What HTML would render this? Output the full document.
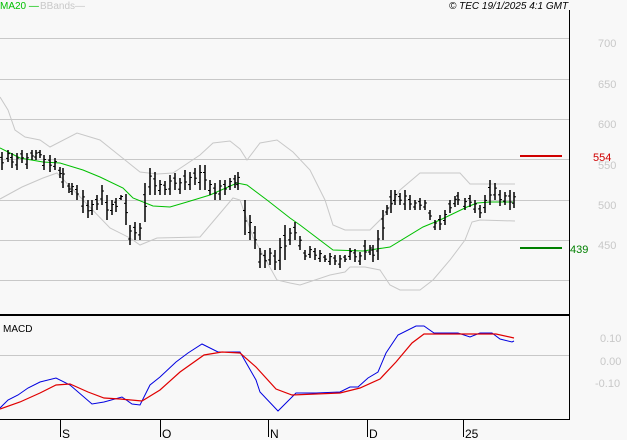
<!DOCTYPE html>
<html><head><meta charset="utf-8"><style>
html,body{margin:0;padding:0;background:#f8f8f8;}
svg{display:block;font-family:"Liberation Sans",sans-serif;}
</style></head><body>
<svg id="s" width="627" height="440" viewBox="0 0 627 440" xmlns="http://www.w3.org/2000/svg">
<rect width="627" height="440" fill="#f8f8f8"/>
<g stroke="#c8c8c8" stroke-width="1">
<line x1="0" y1="38.5" x2="569" y2="38.5"/><line x1="0" y1="79.5" x2="569" y2="79.5"/>
<line x1="0" y1="119.5" x2="569" y2="119.5"/><line x1="0" y1="159.5" x2="569" y2="159.5"/>
<line x1="0" y1="200.5" x2="569" y2="200.5"/><line x1="0" y1="240.5" x2="569" y2="240.5"/>
<line x1="0" y1="280.5" x2="569" y2="280.5"/><line x1="0" y1="355.5" x2="569" y2="355.5"/>
</g>
<g fill="none" stroke="#c8c8c8" stroke-width="1">
<polyline points="0,97 8,110 15,130 25,137 40,140 50,147 77,133 100,140 110,148 125,160 140,172 157,174 173,173 200,155 213,143 230,141 240,149 247,160 260,143 277,140 293,152 310,170 325,200 333,225 345,230 370,230 385,215 400,190 420,173 460,173 470,184 515,184"/>
<polyline points="0,199 22,187 43,178 57,173 83,200 110,228 130,238 140,245 157,238 200,237 233,198 240,200 253,237 277,280 290,283 300,285 315,280 330,275 345,272 350,267 365,267 380,270 390,285 400,290 420,290 433,280 450,260 465,240 472,222 480,220 515,221"/>
</g>
<polyline fill="none" stroke="#00c000" stroke-width="1" points="0,148 20,158 43,162 60,163 83,170 100,177 123,188 133,198 153,206 170,207 187,202 210,195 237,183 247,185 267,200 290,218 300,225 333,250 363,251 390,247 423,227 440,220 467,207 477,203 490,202 513,202"/>
<g id="bars" stroke="#000" stroke-width="1.5"></g>
<line x1="520" y1="156" x2="562" y2="156" stroke="#d00000" stroke-width="2"/>
<line x1="520" y1="248" x2="562" y2="248" stroke="#008000" stroke-width="2"/>
<text x="593" y="161" font-size="11" fill="#d00000">554</text>
<text x="570" y="253" font-size="11" fill="#008000">439</text>
<g font-size="11" fill="#c8c8c8">
<text x="598" y="47">700</text><text x="598" y="88">650</text><text x="598" y="128">600</text>
<text x="598" y="169">550</text><text x="598" y="209">500</text><text x="598" y="249">450</text>
<text x="600" y="342">0.10</text><text x="600" y="365">0.00</text><text x="595" y="387">-0.10</text>
</g>
<polyline fill="none" stroke="#0000e0" stroke-width="1" points="0,408 8,400 18,395 28,388 40,382 56,378 70,385 92,404 104,402 122,397 132,404 140,405 150,385 160,377 176,362 188,353 202,344 218,352 240,352 256,380 260,392 278,411 296,393 316,393 340,392 350,387 358,387 368,378 378,372 386,353 398,335 416,326 424,326 434,333 458,333 470,337 480,333 492,333 500,339 512,342 514,341"/>
<polyline fill="none" stroke="#e00000" stroke-width="1.2" points="0,409 20,402 40,393 56,385 70,384 88,392 104,398 120,399 142,401 160,390 180,372 204,355 222,352 240,353 256,367 276,389 292,395 340,393 360,388 380,379 396,362 412,343 424,334 440,334 496,334 514,338"/>
<line x1="0" y1="315" x2="569" y2="315" stroke="#000" stroke-width="2"/>
<line x1="0" y1="419.5" x2="569" y2="419.5" stroke="#000" stroke-width="1"/>
<line x1="569.5" y1="10" x2="569.5" y2="420" stroke="#000" stroke-width="1"/>
<g stroke="#000"><line x1="60.5" y1="420" x2="60.5" y2="437"/><line x1="160.5" y1="420" x2="160.5" y2="437"/><line x1="268.5" y1="420" x2="268.5" y2="437"/><line x1="367.5" y1="420" x2="367.5" y2="437"/><line x1="463.5" y1="420" x2="463.5" y2="437"/></g>
<g font-size="12" fill="#000"><text x="62" y="438">S</text><text x="162" y="438">O</text><text x="270" y="438">N</text><text x="369" y="438">D</text><text x="465" y="438">25</text></g>
<text x="3" y="332" font-size="10" fill="#000">MACD</text>
<text x="0" y="9" font-size="10" fill="#00c000">MA20 —</text>
<text x="40" y="9" font-size="10" fill="#c8c8c8">BBands—</text>
<text x="449" y="9" font-size="10" font-style="italic" fill="#000">© TEC 19/1/2025 4:1 GMT</text>
</svg>
<script>
var b=[[2,152,170],[8,150,162],[12,153,168],[17,153,170],[22,150,163],[27,153,169],[32,150,160],[36,150,160],[40,150,158],[44,155,170],[50,155,172],[55,158,170],[60,167,178],[63,168,188],[69,183,193],[72,183,195],[77,185,200],[83,190,213],[88,200,218],[92,200,215],[97,195,210],[102,185,205],[107,195,220],[112,200,215],[116,198,212],[121,195,200],[126,194,225],[130,225,245],[135,222,240],[140,223,240],[145,183,222],[150,168,195],[155,172,195],[160,180,195],[165,181,195],[170,175,195],[175,173,190],[180,178,194],[185,170,190],[190,172,190],[195,168,185],[200,165,190],[205,165,190],[210,180,195],[215,183,200],[220,180,200],[225,180,195],[230,178,190],[235,175,188],[238,172,190],[245,200,235],[250,215,240],[255,226,249],[260,248,268],[265,250,268],[270,248,265],[275,250,270],[280,238,270],[285,225,260],[290,228,245],[295,222,240],[300,236,250],[305,250,260],[310,246,258],[315,248,260],[320,250,262],[325,255,262],[330,253,265],[335,255,265],[340,255,268],[345,255,262],[350,248,260],[355,249,262],[360,252,265],[365,240,260],[370,245,255],[373,245,262],[378,230,260],[383,210,240],[387,205,215],[391,190,213],[395,190,205],[400,193,205],[405,190,210],[410,195,210],[415,200,210],[420,198,210],[425,200,210],[430,210,220],[435,220,230],[440,215,230],[445,210,225],[450,200,213],[455,196,207],[458,192,205],[465,198,210],[470,195,207],[475,200,213],[480,205,218],[485,195,213],[490,180,205],[495,183,200],[500,190,206],[505,192,205],[510,190,210],[514,192,208]];
var g=document.getElementById('bars'),h='';
b.forEach(function(a,i){var x=a[0],t=a[1],l=a[2],o=i%2?t+(l-t)*0.7:t+(l-t)*0.3,c=i%2?t+(l-t)*0.3:t+(l-t)*0.6;
h+='<line x1="'+x+'" y1="'+t+'" x2="'+x+'" y2="'+l+'"/><line x1="'+(x-2)+'" y1="'+o+'" x2="'+x+'" y2="'+o+'" stroke-width="1"/><line x1="'+x+'" y1="'+c+'" x2="'+(x+2)+'" y2="'+c+'" stroke-width="1"/>';});
g.innerHTML=h;
</script>
</body></html>
